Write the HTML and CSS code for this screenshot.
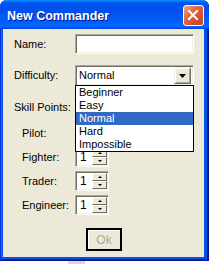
FILE: index.html
```html
<!DOCTYPE html>
<html lang="en">
<head>
    <meta charset="UTF-8">
    <title>New Commander</title>
    <link rel="stylesheet" href="styles.css">
</head>
<body>
    <div class="window">
        <div class="titlebar">
            <span class="title">New Commander</span>
            <button class="close" aria-label="Close">
                <svg viewBox="0 0 21 21" width="19" height="19">
                    <path d="M5.5 5.5 L14.5 14.5 M14.5 5.5 L5.5 14.5" stroke="#fff" stroke-width="2.2" stroke-linecap="square"></path>
                </svg>
            </button>
        </div>

        <div class="client">
            <div class="row name-row">
                <label class="lbl">Name:</label>
                <div class="edit"></div>
            </div>

            <div class="row diff-row">
                <label class="lbl">Difficulty:</label>
                <div class="combo">
                    <span class="combo-text">Normal</span>
                    <span class="combo-btn">
                        <svg viewBox="0 0 7 4" width="7" height="4"><path d="M0 0 H7 L3.5 4 Z" fill="#000"></path></svg>
                    </span>
                    <ul class="combo-list">
                        <li>Beginner</li>
                        <li>Easy</li>
                        <li class="selected">Normal</li>
                        <li>Hard</li>
                        <li>Impossible</li>
                    </ul>
                </div>
            </div>

            <div class="section">Skill Points:</div>

            <div class="skills">
                <div class="row">
                    <label class="lbl sub">Pilot:</label>
                    <div class="spin"><span class="spin-val">1</span><span class="updown"><span class="ud up"></span><span class="ud down"></span></span></div>
                </div>
                <div class="row">
                    <label class="lbl sub">Fighter:</label>
                    <div class="spin"><span class="spin-val">1</span><span class="updown"><span class="ud up"></span><span class="ud down"></span></span></div>
                </div>
                <div class="row">
                    <label class="lbl sub">Trader:</label>
                    <div class="spin"><span class="spin-val">1</span><span class="updown"><span class="ud up"></span><span class="ud down"></span></span></div>
                </div>
                <div class="row">
                    <label class="lbl sub">Engineer:</label>
                    <div class="spin"><span class="spin-val">1</span><span class="updown"><span class="ud up"></span><span class="ud down"></span></span></div>
                </div>
            </div>

            <button class="ok" disabled>Ok</button>
        </div>
    </div>
    <div class="strip"><span class="ghost"></span></div>
</body>
</html>
```

FILE: styles.css
```css
body {
    margin: 0;
    background: #fff;
    font-family: "Liberation Sans", Arial, sans-serif;
    font-size: 11px;
    color: #000;
}

.window {
    width: 209px;
    height: 261px;
    display: flex;
    flex-direction: column;
    background: #0055e8;
    border-radius: 7px 7px 0 0;
    box-shadow: inset -1px -1px #00138c, inset 1px 0 #0831d9, inset -2px -2px #001ea0, inset 2px 0 #166aee;
    overflow: hidden;
}

.titlebar {
    height: 29px;
    flex: none;
    display: flex;
    align-items: center;
    justify-content: space-between;
    padding: 0 5px 0 7px;
    background: linear-gradient(180deg, #0997ff, #0053ee 10%, #0050ee 40%, #0062fa 80%, #0066ff 90%, #005bff 95%, #003dd7);
}

.title {
    color: #fff;
    font-weight: bold;
    font-size: 12.5px;
    padding-top: 3px;
    text-shadow: 1px 1px #0f1089;
}

.close {
    width: 21px;
    height: 21px;
    margin-top: 2px;
    padding: 0;
    border: 1px solid #fff;
    border-radius: 3px;
    background: linear-gradient(135deg, #f4a58c, #e36b48 35%, #d4502a 70%, #c2431f);
    display: flex;
    align-items: center;
    justify-content: center;
}

.client {
    flex: 1;
    margin: 0 5px 4px 3px;
    background: #ece9d8;
    padding: 5px 10px 0 11px;
    display: flex;
    flex-direction: column;
}

.row {
    display: flex;
    align-items: center;
    line-height: 13px;
}

.lbl {
    width: 61px;
    flex: none;
}

.lbl.sub {
    width: 53px;
    padding-left: 8px;
}

/* sunken edit look */
.edit,
.combo,
.spin {
    box-sizing: border-box;
    background: #fff;
    border: 1px solid;
    border-color: #aca899 #fff #fff #aca899;
    box-shadow: inset 1px 1px #716f64, inset -1px -1px #f1efe2;
}

.edit {
    width: 119px;
    height: 20px;
}

.diff-row {
    margin-top: 11px;
}

.combo {
    position: relative;
    width: 119px;
    height: 21px;
    display: flex;
    align-items: center;
    padding: 2px 2px 2px 3px;
}

.combo-text {
    flex: 1;
}

.combo-btn {
    width: 17px;
    height: 17px;
    box-sizing: border-box;
    background: #ece9d8;
    border: 1px solid;
    border-color: #f1efe2 #716f64 #716f64 #f1efe2;
    box-shadow: inset 1px 1px #fff, inset -1px -1px #aca899;
    display: flex;
    align-items: center;
    justify-content: center;
}

.combo-list {
    position: absolute;
    top: 100%;
    left: -1px;
    width: 119px;
    box-sizing: border-box;
    margin: 0;
    padding: 0;
    list-style: none;
    background: #fff;
    border: 1px solid #000;
    z-index: 5;
}

.combo-list li {
    height: 13px;
    line-height: 13px;
    padding-left: 3px;
}

.combo-list li.selected {
    background: #316ac5;
    color: #fff;
}

.section {
    margin-top: 15px;
    line-height: 13px;
}

.skills {
    margin-top: 9px;
    display: flex;
    flex-direction: column;
    gap: 4px;
}

.spin {
    width: 34px;
    height: 20px;
    display: flex;
    padding: 1px 1px 1px 1px;
}

.spin-val {
    flex: 1;
    font-size: 12px;
    line-height: 16px;
    padding-left: 3px;
}

.updown {
    width: 15px;
    display: flex;
    flex-direction: column;
}

.ud {
    flex: 1;
    box-sizing: border-box;
    background: #ece9d8;
    border: 1px solid;
    border-color: #fff #716f64 #716f64 #fff;
    display: flex;
    align-items: center;
    justify-content: center;
}

.ud::after {
    content: "";
    width: 0;
    height: 0;
    border-left: 2px solid transparent;
    border-right: 2px solid transparent;
}

.ud.up::after {
    border-bottom: 2px solid #000;
}

.ud.down::after {
    border-top: 2px solid #000;
}

.ok {
    align-self: center;
    margin-top: 13px;
    width: 36px;
    height: 23px;
    padding: 0;
    background: #ece9d8;
    border: 2px solid #000;
    box-shadow: inset 1px 1px #fff;
    font-family: "Liberation Sans", Arial, sans-serif;
    font-size: 12px;
    color: #aca899;
}

.strip {
    height: 3px;
    display: flex;
}

.ghost {
    width: 17px;
    margin-left: 68px;
    background: #d8d8d8;
}
```
